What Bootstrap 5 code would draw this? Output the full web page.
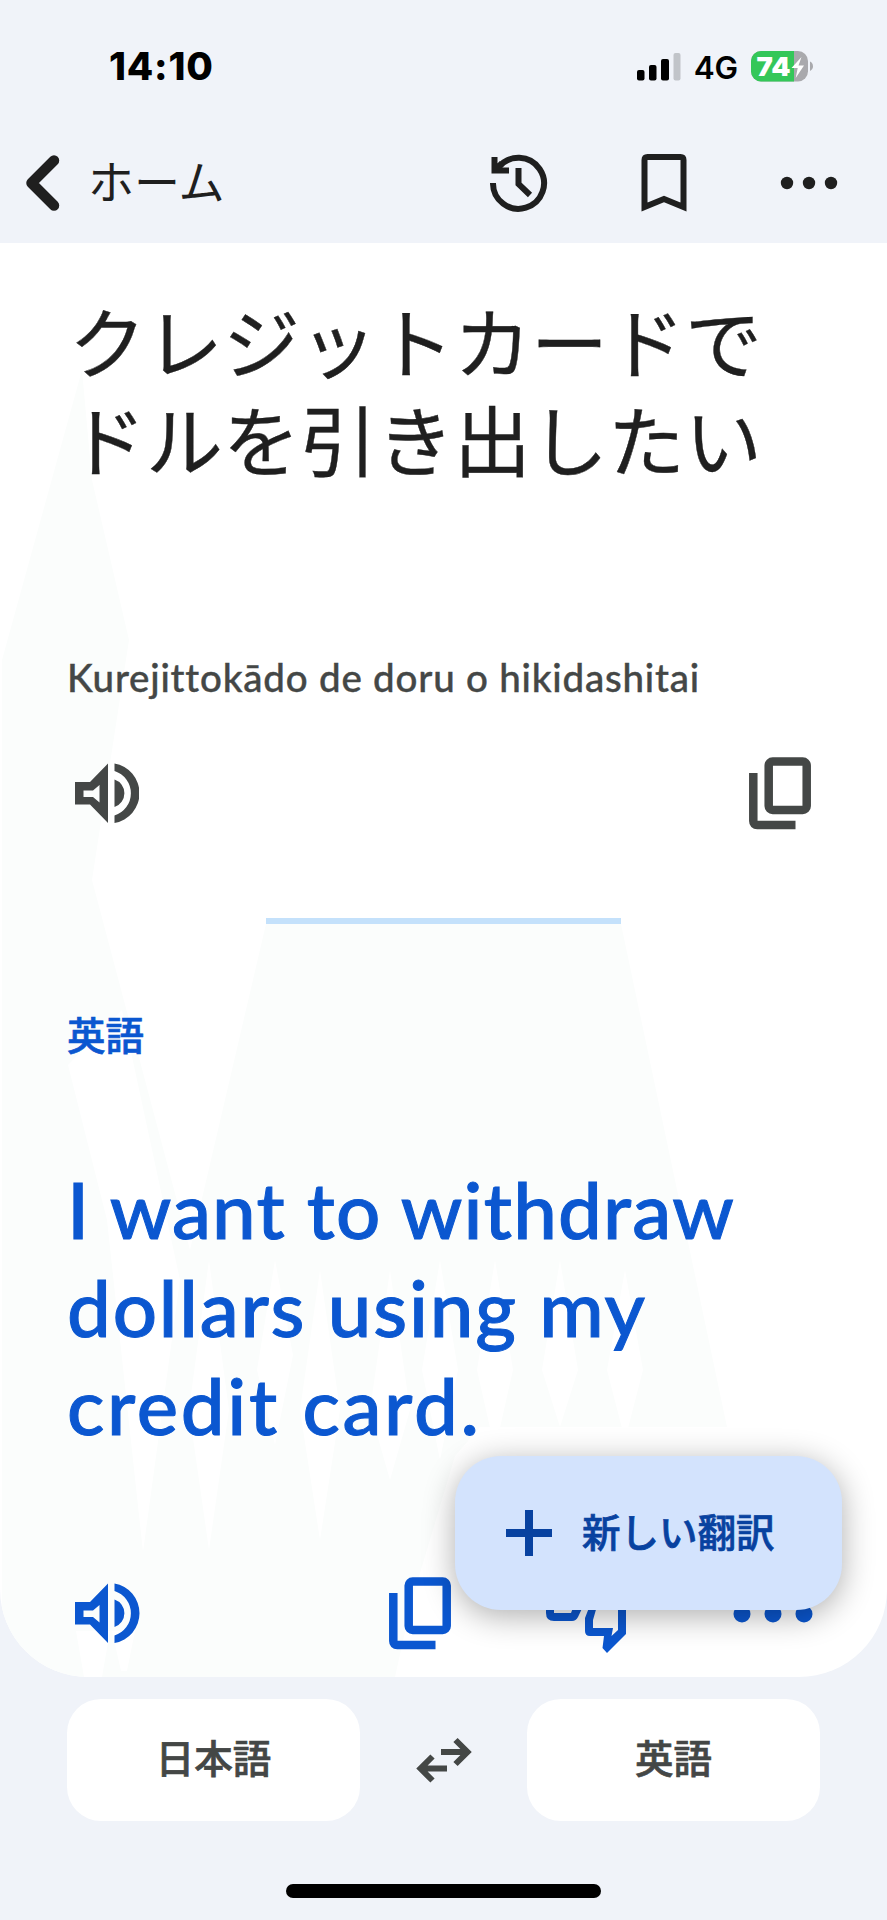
<!DOCTYPE html>
<html lang="ja">
<head>
<meta charset="utf-8">
<meta name="viewport" content="width=device-width, initial-scale=1">
<title>翻訳</title>
<link href="https://cdn.jsdelivr.net/npm/bootstrap@5.3.0/dist/css/bootstrap.min.css" rel="stylesheet">
<style>
body{width:887px;height:1920px;overflow:hidden;background:#f0f3f9;color:#1f1f1f;font-family:"Noto Sans CJK JP",sans-serif}
svg{display:block;flex:none}
button{color:inherit}
.status{height:133px;padding:0 74px 0 109px;font-family:Inter,sans-serif;color:#000}
.clock{font-size:38.5px;font-weight:800;letter-spacing:.8px}
.net{font-size:31.5px;font-weight:600;letter-spacing:-.2px;margin:2px 13px 0 13px}
.topbar{height:110px;padding:0 49px 11px 26px}
.home-label{font-size:46px;line-height:60px;margin:-8px 0 0 28px}
.sheet{height:1434px;background:#fff;border-radius:0 0 88px 88px;padding:48px 67px 0;overflow:hidden}
.shade{left:0;top:0}
.source{font-size:77px;line-height:98px;height:196px;white-space:nowrap;margin-left:2px;-webkit-text-stroke:.4px currentColor}
.source span{display:block;height:98px}
.roman{font:500 38.5px/48px Lato,sans-serif;letter-spacing:.8px;-webkit-text-stroke:.4px currentColor;color:#444746;margin-top:166px;white-space:nowrap}
.gray{color:#444746}.blue{color:#0b57d0}
.rule{width:355px;height:6px;background:#c4e1fb;margin:88px auto 0}
.cjk-medium{font-size:38.5px;font-weight:500;-webkit-text-stroke:.7px currentColor}
.lang{line-height:50px;margin-top:84px}
.target{font:500 78px/98px Lato,sans-serif;margin-top:102px;height:294px;white-space:nowrap;-webkit-text-stroke:1px currentColor}
.target span{display:block}
.t1{letter-spacing:1.2px}.t2{letter-spacing:1.8px}.t3{letter-spacing:2.7px}
.fab{left:455px;top:1456px;width:387px;height:154px;border-radius:46px;background:#d3e3fd;color:#0842a0;padding:0 0 0 51px;gap:30px;box-shadow:0 6px 32px rgba(0,0,0,.32)}
.fab:hover{background:#d3e3fd;color:#0842a0}
.fab span{margin-top:-4px}
.bottom{height:144px;padding:22px 67px 0}
.pick{width:293px;height:122px;border-radius:34px;background:#fff;color:#444746}
.pick span{position:relative;top:-3px}
.homebar{width:315px;height:14px;border-radius:7px;background:#000;margin:63px auto 0}
</style>
</head>
<body class="position-relative">
<header>
  <div class="status d-flex align-items-center justify-content-between">
    <span class="clock">14:10</span>
    <div class="d-flex align-items-center">
      <svg width="44" height="28"><rect y="17" width="7.5" height="10.5" rx="2"/><rect x="12" y="12" width="7.5" height="15.5" rx="2"/><rect x="24" y="6" width="8" height="21.5" rx="2"/><rect x="36.5" width="7" height="27.5" rx="2" fill="#c1c4c9"/></svg>
      <span class="net">4G</span>
      <svg width="62" height="31" viewBox="0 0 62 31"><defs><clipPath id="bat"><rect width="57" height="30.5" rx="10"/></clipPath></defs><g clip-path="url(#bat)"><rect width="57" height="31" fill="#a9a9ad"/><rect width="43" height="31" fill="#34c759"/></g><path d="M59 10.5q3 1.5 3 4.700t-3 4.700z" fill="#a9a9ad"/><text x="5.500" y="24.500" font-size="26" font-weight="900" fill="#fff" textLength="34" lengthAdjust="spacingAndGlyphs">74</text><path d="M50.500 6 40.500 17h6.200l-2 10 8.300-12.500h-5.500z" fill="#fff"/></svg>
    </div>
  </div>
  <nav class="topbar d-flex align-items-center">
    <svg width="34" height="56" viewBox="0 0 34 56"><path d="M28 5.500 5.500 28 28 50.500" fill="none" stroke="#1f1f1f" stroke-width="10.500" stroke-linecap="round" stroke-linejoin="round"/></svg>
    <span class="home-label">ホーム</span>
    <div class="d-flex align-items-center ms-auto">
      <svg width="58" height="60" viewBox="0 0 58 60" fill="none" stroke="#1f1f1f" stroke-width="6"><path d="M3 30a25.500 25.500 0 1 0 5.500-15.500"/><path d="M4.500 4v13.500H19M5 17l7-7"/><path d="M28.500 15v16l11.500 11"/></svg>
      <svg width="46" height="60" viewBox="0 0 46 60" style="margin-left:93px"><path d="M3.500 54V7q0-3 3-3h33q3 0 3 3v47L23 46z" fill="none" stroke="#1f1f1f" stroke-width="6"/></svg>
      <svg width="58" height="14" viewBox="0 0 58 14" style="margin-left:93px" fill="#1f1f1f"><circle cx="7" cy="7" r="6.200"/><circle cx="29" cy="7" r="6.200"/><circle cx="51" cy="7" r="6.200"/></svg>
    </div>
  </nav>
</header>

<main class="sheet position-relative">
  <svg class="shade position-absolute" width="887" height="1434" viewBox="0 243 887 1434" fill="#fbfdfc">
    <path d="M82 370 2 660V1677H395L412 1600 455 1456 480 1427H727L621 924H266L190 1250 92 880 129 640 92 480z"/>
    <path fill="#fff" d="M68 1065 107 1220 143 1552 180 1280 122 1010zM209 1260l-20 150 20 140 20-140zM275 1260l-18 110 18 75 18-90zM320 1270l-20 140 20 130 20-130zM390 1270l-20 140 20 70 20-70zM440 1260l-18 110 18 90 18-90zM495 1260l-18 110 18 80 18-80zM560 1260l-18 110 18 57 18-57zM625 1270l-18 100 18 70 18-70zM76 1631l8 46h18l8-46zM112 1631l9 40h6l8-40z"/>
  </svg>
  <div class="position-relative">
    <div class="source"><span>クレジットカードで</span><span>ドルを引き出したい</span></div>
    <div class="roman">Kurejittokādo de doru o hikidashitai</div>
    <div class="gray d-flex justify-content-between" style="margin:55px 8px 0">
      <svg width="64" height="74" viewBox="75 1576 64 74"><use href="#speaker"/></svg>
      <svg width="63" height="74" viewBox="389 1576 63 74"><use href="#copy"/></svg>
    </div>
    <div class="rule"></div>
    <div class="lang blue cjk-medium">英語</div>
    <div class="target blue"><span class="t1">I want to withdraw</span><span class="t2">dollars using my</span><span class="t3">credit card.</span></div>
    <div class="blue">
      <svg width="753" height="90" viewBox="67 1570 753 90" style="margin-top:116px">
        <g id="speaker" fill="currentColor"><path fill-rule="evenodd" d="M75 1602h15l18-18.500v59.500l-18-18.500H75zM83.500 1610.500v6.500h9.500l6.500 5.500v-17.500l-6.500 5.500z"/><path d="M114.500 1599.500a14.500 14.500 0 0 1 0 27.500zM114.500 1583.500a30.200 30.200 0 0 1 0 59.500v-7.500a23.300 23.300 0 0 0 0-44.500z"/></g>
        <g id="copy" fill="none" stroke="currentColor" stroke-width="8.500"><rect x="408.700" y="1581.500" width="38" height="48.500" rx="4"/><path d="M393.300 1593v48q0 4 4 4h38.200"/></g>
        <path d="M546 1600v13q0 8 8 8h18q4 0 6-4l8-17h-10l-5 13H554v-13z" fill="currentColor"/>
        <path fill-rule="evenodd" d="M597 1600-5 0zM592 1600l-7 18v13q0 5 5 5h14l-1.500 12 4.500 5 19-19v-34zM597 1606h21v24l-6.500 6 1.500-8H593v-8z" fill="currentColor"/>
        <g fill="currentColor"><circle cx="742" cy="1614" r="8.500"/><circle cx="773" cy="1614" r="8.500"/><circle cx="804" cy="1614" r="8.500"/></g>
      </svg>
    </div>
  </div>
</main>

<footer>
  <div class="bottom d-flex align-items-center justify-content-between">
    <button class="pick btn border-0 p-0 cjk-medium"><span>日本語</span></button>
    <svg width="56" height="46" viewBox="0 0 56 46" fill="none" stroke="#444746" stroke-width="6"><path d="M25 15h26M39.500 3l12 12-12 12M31 31.500H5M16.500 19.500l-12 12 12 12"/></svg>
    <button class="pick btn border-0 p-0 cjk-medium"><span>英語</span></button>
  </div>
  <div class="homebar"></div>
</footer>

<button class="fab btn border-0 position-absolute d-flex align-items-center cjk-medium">
  <svg width="46" height="46" viewBox="0 0 46 46"><path d="M0 23h46M23 0v46" stroke="currentColor" stroke-width="8"/></svg>
  <span>新しい翻訳</span>
</button>
<script src="https://cdn.jsdelivr.net/npm/bootstrap@5.3.0/dist/js/bootstrap.bundle.min.js"></script>
</body>
</html>
